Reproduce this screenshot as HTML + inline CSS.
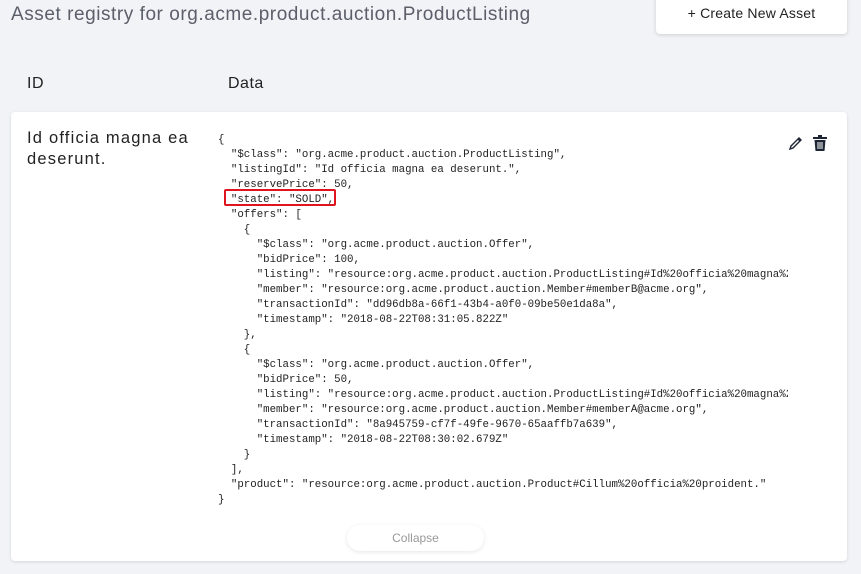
<!DOCTYPE html>
<html><head><style>
body{margin:0;width:861px;height:574px;background:#f2f3f7;font-family:"Liberation Sans",sans-serif;overflow:hidden;position:relative;color:#222}
.title{position:absolute;left:11px;top:4px;font-size:19px;color:#5b5f6a;letter-spacing:0.55px}
.btn{position:absolute;left:656px;top:-6px;width:191px;height:40px;background:#fff;border-radius:4px;box-shadow:0 1px 4px rgba(0,0,0,.15);font-size:14px;color:#222;text-align:center;line-height:38px;box-sizing:border-box;letter-spacing:0.2px}
.h{position:absolute;top:75px;font-size:16px;color:#222;letter-spacing:0.5px}
.card{position:absolute;left:11px;top:112px;width:836px;height:449px;background:#fff;border-radius:4px;box-shadow:0 1px 3px rgba(0,0,0,.12)}
.id{position:absolute;left:16px;top:16px;font-size:16.5px;line-height:21px;color:#222;letter-spacing:1.2px}
pre{position:absolute;left:207px;top:21px;margin:0;width:570px;overflow:hidden;font-family:"Liberation Mono",monospace;font-size:10.75px;line-height:15px;color:#222}
.box{position:absolute;left:213px;top:77px;width:108px;height:13px;border:2px solid #e0141e;border-radius:2px}
.col{position:absolute;left:336px;top:413px;width:137px;height:26px;border-radius:13px;background:#fff;box-shadow:0 1px 5px rgba(0,0,0,.1);font-size:12px;color:#999;text-align:center;line-height:26px}
</style></head><body>
<div class="title">Asset registry for org.acme.product.auction.ProductListing</div>
<div class="btn">+ Create New Asset</div>
<div class="h" style="left:27px">ID</div>
<div class="h" style="left:228px">Data</div>
<div class="card">
<div class="id">Id officia magna ea<br>deserunt.</div>
<pre>{
  "$class": "org.acme.product.auction.ProductListing",
  "listingId": "Id officia magna ea deserunt.",
  "reservePrice": 50,
  "state": "SOLD",
  "offers": [
    {
      "$class": "org.acme.product.auction.Offer",
      "bidPrice": 100,
      "listing": "resource:org.acme.product.auction.ProductListing#Id%20officia%20magna%20ea",
      "member": "resource:org.acme.product.auction.Member#memberB@acme.org",
      "transactionId": "dd96db8a-66f1-43b4-a0f0-09be50e1da8a",
      "timestamp": "2018-08-22T08:31:05.822Z"
    },
    {
      "$class": "org.acme.product.auction.Offer",
      "bidPrice": 50,
      "listing": "resource:org.acme.product.auction.ProductListing#Id%20officia%20magna%20ea",
      "member": "resource:org.acme.product.auction.Member#memberA@acme.org",
      "transactionId": "8a945759-cf7f-49fe-9670-65aaffb7a639",
      "timestamp": "2018-08-22T08:30:02.679Z"
    }
  ],
  "product": "resource:org.acme.product.auction.Product#Cillum%20officia%20proident."
}</pre>
<div class="box"></div>
<svg style="position:absolute;left:777px;top:23px" width="16" height="16" viewBox="0 0 16 16"><path d="M2 14 L3 11 L11 3 L13 5 L5 13 Z M10 4 L12 6" fill="none" stroke="#1d2433" stroke-width="1.4"/></svg>
<svg style="position:absolute;left:801px;top:22px" width="16" height="18" viewBox="0 0 16 18"><path d="M1 3h14v2H1z M6 1h4v2H6z M2.5 6h11l-1 11h-9z" fill="#1d2433"/><path d="M6 8v7M8 8v7M10 8v7" stroke="#fff" stroke-width="1"/></svg>
<div class="col">Collapse</div>
</div>
</body></html>
